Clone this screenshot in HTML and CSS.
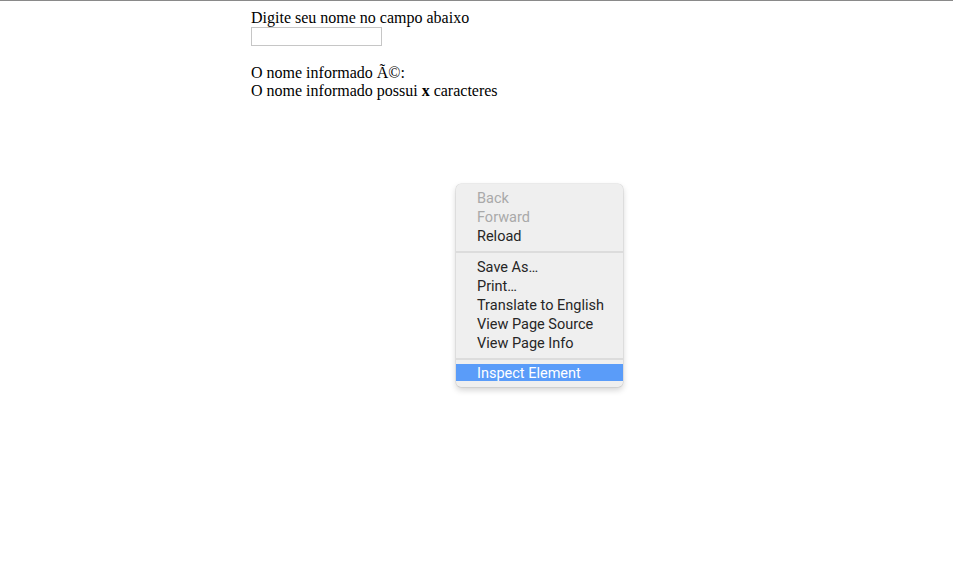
FILE: index.html
```html
<!DOCTYPE html>
<html>
<head>
<meta charset="utf-8">
<link rel="stylesheet" href="styles.css">
</head>
<body>
<div class="topline"></div>
<main class="page">
  <div class="line">Digite seu nome no campo abaixo</div>
  <div class="field-row"><input class="field" type="text"></div>
  <div class="line blank"></div>
  <div class="line">O nome informado Ã©:</div>
  <div class="line">O nome informado possui <b>x</b> caracteres</div>
</main>
<div class="menu">
  <div class="item disabled">Back</div>
  <div class="item disabled">Forward</div>
  <div class="item">Reload</div>
  <div class="sep"></div>
  <div class="item">Save As…</div>
  <div class="item">Print…</div>
  <div class="item">Translate to English</div>
  <div class="item">View Page Source</div>
  <div class="item">View Page Info</div>
  <div class="sep last"></div>
  <div class="item active">Inspect Element</div>
</div>
</body>
</html>
```
FILE: styles.css
```css
html, body {
  margin: 0;
  padding: 0;
  background: #ffffff;
}
body {
  font-family: "Liberation Serif", "Times New Roman", serif;
  font-size: 16px;
  color: #000;
  position: relative;
  width: 953px;
  height: 581px;
  overflow: hidden;
}
.topline {
  height: 1px;
  background: #8a8a8a;
}
.page {
  padding: 8px 0 0 251px;
}
.line {
  line-height: 18px;
  height: 18px;
  white-space: nowrap;
}
.line b {
  font-weight: bold;
}
.field-row {
  height: 19px;
}
.field {
  display: block;
  box-sizing: border-box;
  width: 131px;
  height: 19px;
  margin: 0;
  padding: 0 3px;
  border: 1px solid #c6c6c6;
  background: #fff;
  outline: none;
}
.menu {
  position: absolute;
  left: 456px;
  top: 184px;
  width: 167px;
  box-sizing: border-box;
  padding: 5px 0 6px 0;
  background: #efefef;
  border-radius: 5px;
  box-shadow: 0 0 0 0.5px rgba(0,0,0,0.12), 0 3px 6px rgba(0,0,0,0.18);
  font-family: "Roboto", "Liberation Sans", sans-serif;
  font-size: 14.5px;
  color: #262626;
}
.item {
  height: 19px;
  line-height: 19px;
  padding-left: 21px;
  white-space: nowrap;
}
.item.disabled {
  color: #a9a9a9;
}
.item.active {
  background: #5a9cf9;
  color: #ffffff;
  height: 17px;
  line-height: 20px;
  overflow: hidden;
}
.sep {
  height: 2px;
  background: #dcdcdc;
  margin: 5px 0 5px 0;
}
.sep.last {
  margin: 5px 0 4px 0;
}
```
